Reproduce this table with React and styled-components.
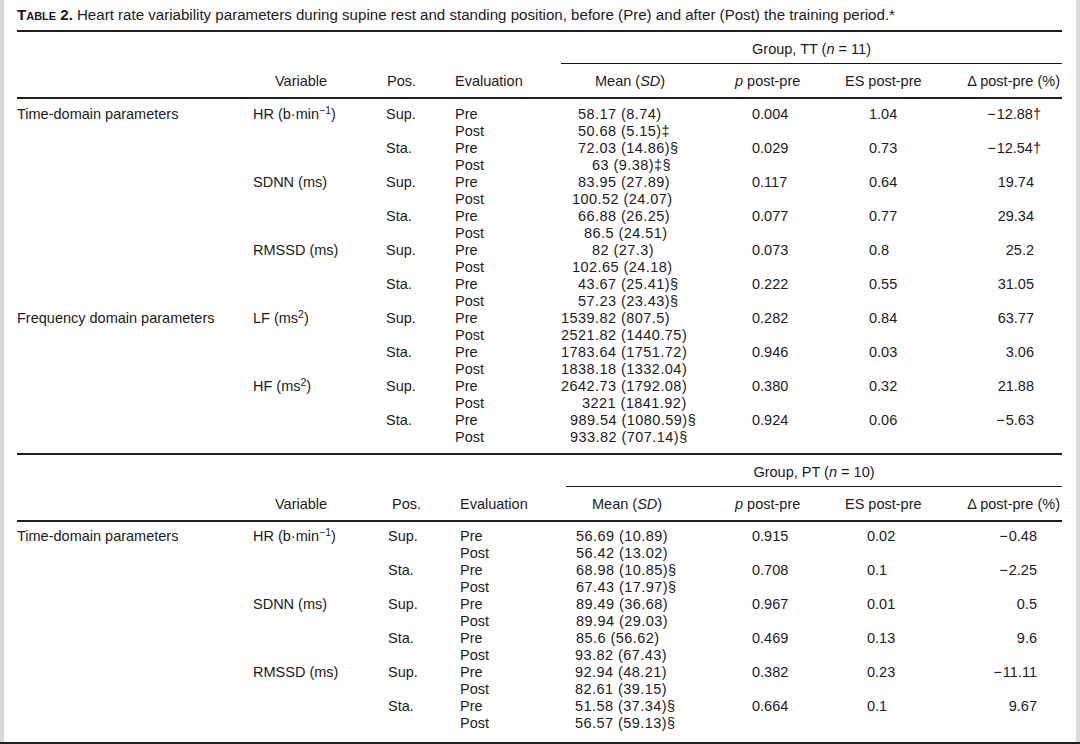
import React from 'react';
import styled, { createGlobalStyle } from 'styled-components';

const GlobalStyle = createGlobalStyle`
  body {
    margin: 0;
    background: #fff;
    color: #1b1b1b;
    font-family: "Liberation Sans", Arial, Helvetica, sans-serif;
  }
`;

const Frame = styled.div`
  height: 744px;
  box-sizing: border-box;
  border-bottom: 2px solid #1e1e1e;
  overflow: hidden;
`;

const Page = styled.div`
  height: 100%;
  box-sizing: border-box;
  border-left: 4px solid #d8d8d8;
  border-right: 4px solid #dcdcdc;
  padding: 6px 14px 0 13px;
`;

const Caption = styled.div`
  font-size: 15.1px;
  line-height: 18px;
  white-space: nowrap;
`;

const CaptionLabel = styled.span`
  font-weight: bold;
  font-variant: small-caps;
  margin-right: 4px;
`;

const Rule = styled.div`
  height: 2px;
  background: #1e1e1e;
  margin-top: ${(p) => p.$top || 0}px;
`;

const Row = styled.div`
  display: grid;
  grid-template-columns: ${(p) => p.$cols};
  height: ${(p) => p.$h}px;
  align-items: center;
  font-size: 14.5px;
  white-space: nowrap;
`;

const GroupTitle = styled.div`
  grid-column: 5 / 9;
  align-self: stretch;
  display: flex;
  align-items: center;
  justify-content: center;
  border-bottom: 1px solid #151515;
  padding-top: 2px;
`;

const Cell = styled.div`
  padding-left: ${(p) => p.$pad || 0}px;
  padding-right: ${(p) => p.$padR || 0}px;
  text-align: ${(p) => p.$align || 'left'};
`;

const Num = styled(Cell)`
  letter-spacing: 0.45px;
`;

const Body = styled.div`
  padding: ${(p) => p.$top}px 0 ${(p) => p.$bottom}px;
`;

const Sup = styled.sup`
  font-size: 10.5px;
  line-height: 0;
  vertical-align: 5px;
`;

const Minus = styled.span`
  margin-right: 1px;
`;

const Mark = styled.span`
  margin-right: -7px;
`;

const hr = <>HR (b·min<Sup>−1</Sup>)</>;
const lf = <>LF (ms<Sup>2</Sup>)</>;
const hf = <>HF (ms<Sup>2</Sup>)</>;

const sections = [
  {
    name: 'TT',
    n: 11,
    cols: '236px 133px 69px 106px 174px 110px 118px 99px',
    head: { variable: 22, pos: 1, mean: 34 },
    body: { top: 6, bottom: 8 },
    data: { p: 17, es: 24, delta: 28 },
    rows: [
      { domain: 'Time-domain parameters', variable: hr, pos: 'Sup.', pre: ['58.17 (8.74)', 17], post: ['50.68 (5.15)‡', 17], p: '0.004', es: '1.04', delta: '−12.88', mark: '†' },
      { pos: 'Sta.', pre: ['72.03 (14.86)§', 17], post: ['63 (9.38)‡§', 31], p: '0.029', es: '0.73', delta: '−12.54', mark: '†' },
      { variable: 'SDNN (ms)', pos: 'Sup.', pre: ['83.95 (27.89)', 17], post: ['100.52 (24.07)', 11], p: '0.117', es: '0.64', delta: '19.74' },
      { pos: 'Sta.', pre: ['66.88 (26.25)', 17], post: ['86.5 (24.51)', 23], p: '0.077', es: '0.77', delta: '29.34' },
      { variable: 'RMSSD (ms)', pos: 'Sup.', pre: ['82 (27.3)', 31], post: ['102.65 (24.18)', 11], p: '0.073', es: '0.8', delta: '25.2' },
      { pos: 'Sta.', pre: ['43.67 (25.41)§', 17], post: ['57.23 (23.43)§', 17], p: '0.222', es: '0.55', delta: '31.05' },
      { domain: 'Frequency domain parameters', variable: lf, pos: 'Sup.', pre: ['1539.82 (807.5)', 0], post: ['2521.82 (1440.75)', 0], p: '0.282', es: '0.84', delta: '63.77' },
      { pos: 'Sta.', pre: ['1783.64 (1751.72)', 0], post: ['1838.18 (1332.04)', 0], p: '0.946', es: '0.03', delta: '3.06' },
      { variable: hf, pos: 'Sup.', pre: ['2642.73 (1792.08)', 0], post: ['3221 (1841.92)', 21], p: '0.380', es: '0.32', delta: '21.88' },
      { pos: 'Sta.', pre: ['989.54 (1080.59)§', 9], post: ['933.82 (707.14)§', 9], p: '0.924', es: '0.06', delta: '−5.63' },
    ],
  },
  {
    name: 'PT',
    n: 10,
    cols: '236px 135px 72px 106px 169px 110px 118px 99px',
    head: { variable: 22, pos: 4, mean: 26 },
    body: { top: 5, bottom: 0 },
    data: { p: 17, es: 22, delta: 25 },
    rows: [
      { domain: 'Time-domain parameters', variable: hr, pos: 'Sup.', pre: ['56.69 (10.89)', 10], post: ['56.42 (13.02)', 10], p: '0.915', es: '0.02', delta: '−0.48' },
      { pos: 'Sta.', pre: ['68.98 (10.85)§', 10], post: ['67.43 (17.97)§', 10], p: '0.708', es: '0.1', delta: '−2.25' },
      { variable: 'SDNN (ms)', pos: 'Sup.', pre: ['89.49 (36.68)', 10], post: ['89.94 (29.03)', 10], p: '0.967', es: '0.01', delta: '0.5' },
      { pos: 'Sta.', pre: ['85.6 (56.62)', 10], post: ['93.82 (67.43)', 9], p: '0.469', es: '0.13', delta: '9.6' },
      { variable: 'RMSSD (ms)', pos: 'Sup.', pre: ['92.94 (48.21)', 9], post: ['82.61 (39.15)', 9], p: '0.382', es: '0.23', delta: '−11.11' },
      { pos: 'Sta.', pre: ['51.58 (37.34)§', 9], post: ['56.57 (59.13)§', 9], p: '0.664', es: '0.1', delta: '9.67' },
    ],
  },
];

function Delta({ value, mark }) {
  const negative = value.startsWith('−');
  return (
    <>
      {negative && <Minus>−</Minus>}
      {negative ? value.slice(1) : value}
      {mark && <Mark>{mark}</Mark>}
    </>
  );
}

function Section({ section }) {
  const { cols, head, body, data } = section;
  return (
    <>
      <Row $cols={cols} $h={32}>
        <GroupTitle>
          Group, {section.name} (<i>n</i>&nbsp;=&nbsp;{section.n})
        </GroupTitle>
      </Row>
      <Row $cols={cols} $h={33}>
        <Cell />
        <Cell $pad={head.variable}>Variable</Cell>
        <Cell $pad={head.pos}>Pos.</Cell>
        <Cell>Evaluation</Cell>
        <Cell $pad={head.mean}>Mean (<i>SD</i>)</Cell>
        <Cell><i>p</i> post-pre</Cell>
        <Cell>ES post-pre</Cell>
        <Cell $align="right" $padR={2}>Δ post-pre (%)</Cell>
      </Row>
      <Rule />
      <Body $top={body.top} $bottom={body.bottom}>
        {section.rows.map((r, i) => (
          <React.Fragment key={i}>
            <Row $cols={cols} $h={17}>
              <Cell>{r.domain}</Cell>
              <Cell>{r.variable}</Cell>
              <Cell>{r.pos}</Cell>
              <Cell>Pre</Cell>
              <Num $pad={r.pre[1]}>{r.pre[0]}</Num>
              <Cell $pad={data.p}>{r.p}</Cell>
              <Cell $pad={data.es}>{r.es}</Cell>
              <Cell $align="right" $padR={data.delta}>
                <Delta value={r.delta} mark={r.mark} />
              </Cell>
            </Row>
            <Row $cols={cols} $h={17}>
              <Cell />
              <Cell />
              <Cell />
              <Cell>Post</Cell>
              <Num $pad={r.post[1]}>{r.post[0]}</Num>
            </Row>
          </React.Fragment>
        ))}
      </Body>
    </>
  );
}

export default function App() {
  return (
    <Frame>
      <GlobalStyle />
      <Page>
        <Caption>
          <CaptionLabel>Table 2.</CaptionLabel>
          Heart rate variability parameters during supine rest and standing position, before (Pre) and after (Post) the training period.*
        </Caption>
        <Rule $top={6} />
        <Section section={sections[0]} />
        <Rule />
        <Section section={sections[1]} />
      </Page>
    </Frame>
  );
}
